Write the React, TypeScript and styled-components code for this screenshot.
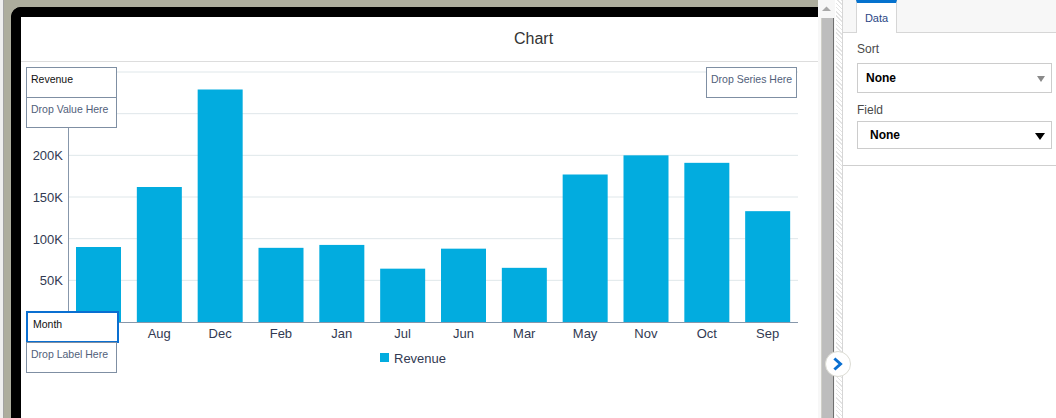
import * as React from 'react';
import styled, { createGlobalStyle } from 'styled-components';

const GlobalStyle = createGlobalStyle`
  html, body {
    margin: 0;
    padding: 0;
    background: #ffffff;
    font-family: "Liberation Sans", Arial, sans-serif;
  }
`;

const Page = styled.div`
  position: relative;
  display: flex;
  width: 1056px;
  height: 418px;
  overflow: hidden;
`;

const LeftRail = styled.div`
  width: 3px;
  background: #efefef;
  border-right: 1px solid #a3a3a3;
`;

const Backdrop = styled.div`
  flex: 1;
  display: flex;
  flex-direction: column;
  background: #adad9d;
  padding: 7px 0 0 7px;
`;

const Frame = styled.div`
  position: relative;
  flex: 1;
  background: #ffffff;
  border-top: 10px solid #000;
  border-left: 10px solid #000;
  border-top-left-radius: 10px;
  overflow: hidden;
`;

const Title = styled.div`
  height: 44px;
  line-height: 44px;
  border-bottom: 1px solid #dddddd;
  padding-left: 493px;
  font-size: 16px;
  color: #333333;
`;

const Scrollbar = styled.div`
  width: 17px;
  display: flex;
  flex-direction: column;
  background: #f7f7f7;
`;

const ArrowCell = styled.div`
  height: 18px;
  display: flex;
  align-items: center;
  justify-content: center;
`;

const Thumb = styled.div`
  flex: 1;
  margin: 0 1px 0 3px;
  background: #bdbdbd;
  border-left: 1px solid #d0d0c8;
  border-right: 1px solid #6f6f6f;
`;

const Divider = styled.div`
  width: 6px;
  background: repeating-linear-gradient(45deg, #ffffff 0 2px, #e4e4e4 2px 3px);
  border-left: 1px solid #ffffff;
`;

const Panel = styled.div`
  width: 213px;
  border-left: 1px solid #d6d6d6;
  display: flex;
  flex-direction: column;
  background: #fff;
`;

const TabStrip = styled.div`
  height: 32px;
  background: #f7f7f7;
  border-bottom: 1px solid #d6d6d6;
  padding-left: 13px;
  display: flex;
  align-items: flex-start;
`;

const Tab = styled.div`
  width: 39px;
  height: 30px;
  margin-bottom: -1px;
  background: #ffffff;
  border-top: 3px solid #0572ce;
  border-left: 1px solid #d6d6d6;
  border-right: 1px solid #d6d6d6;
  display: flex;
  align-items: center;
  justify-content: center;
  font-size: 11px;
  color: #2a4785;
`;

const Fields = styled.div`
  display: flex;
  flex-direction: column;
  padding: 0 4px 16px 14px;
  border-bottom: 1px solid #cfcfcf;
`;

const Label = styled.div<{ $top: number }>`
  margin-top: ${(p) => p.$top}px;
  height: 14px;
  line-height: 14px;
  font-size: 12px;
  color: #4a4a4a;
`;

const Select = styled.div<{ $h: number; $pad: number }>`
  margin-top: ${(p) => (p.$h === 30 ? 7 : 4)}px;
  height: ${(p) => p.$h - 2}px;
  border: 1px solid #cccccc;
  display: flex;
  align-items: center;
  justify-content: space-between;
  padding: 0 6px 0 ${(p) => p.$pad}px;
  font-size: 12px;
  font-weight: bold;
  color: #000;
`;

const Caret = styled.span<{ $color: string; $w: number }>`
  width: 0;
  height: 0;
  border-left: ${(p) => p.$w / 2}px solid transparent;
  border-right: ${(p) => p.$w / 2}px solid transparent;
  border-top: ${(p) => p.$w * 0.7}px solid ${(p) => p.$color};
  margin-top: 2px;
`;

const DropStack = styled.div<{ $x: number; $y: number }>`
  position: absolute;
  left: ${(p) => p.$x}px;
  top: ${(p) => p.$y}px;
  display: flex;
  flex-direction: column;
`;

const DropBox = styled.div<{ $filled?: boolean; $active?: boolean }>`
  box-sizing: border-box;
  width: ${(p) => (p.$active ? 93 : 91)}px;
  height: ${(p) => (p.$active ? 32 : 31)}px;
  margin-top: ${(p) => (p.$active ? 0 : -1)}px;
  background: #ffffff;
  border: ${(p) => (p.$active ? '2px solid #0a6fd1' : '1px solid #7f8fa3')};
  padding: ${(p) => (p.$active ? '5px 0 0 5px' : '5px 0 0 4px')};
  font-size: 10.5px;
  line-height: 12px;
  color: ${(p) => (p.$filled ? '#111' : '#51607a')};
  &:first-child {
    margin-top: 0;
  }
`;

const NavButton = styled.div`
  position: absolute;
  left: 825px;
  top: 351px;
  width: 26px;
  height: 26px;
  border-radius: 50%;
  background: #ffffff;
  border: 1px solid #dcdcd4;
  box-sizing: border-box;
  display: flex;
  align-items: center;
  justify-content: center;
`;

const months = ['Apr', 'Aug', 'Dec', 'Feb', 'Jan', 'Jul', 'Jun', 'Mar', 'May', 'Nov', 'Oct', 'Sep'];
const revenue = [90000, 162000, 279000, 89000, 92500, 64000, 88000, 65000, 177000, 200000, 191000, 133000];
// 250K / 300K labels sit under the drop boxes, so only the visible ones are drawn
const ticks = [50000, 100000, 150000, 200000, 250000, 300000];
const labelled = [50000, 100000, 150000, 200000];

const plotLeft = 47;
const plotRight = 777;
const baseY = 260;
const yOf = (v: number) => baseY - (v * 250) / 300000;

const Chart = () => {
  const band = (plotRight - plotLeft) / months.length;
  return (
    <svg width="797" height="356" style={{ display: 'block' }} fontFamily='"Liberation Sans", Arial, sans-serif'>
      {ticks.map((t) => (
        <line key={t} x1={plotLeft} x2={plotRight} y1={yOf(t)} y2={yOf(t)} stroke="#dfe7ea" strokeWidth="1" />
      ))}
      {labelled.map((t) => (
        <text key={'l' + t} x={42} y={yOf(t) + 5} textAnchor="end" fontSize="13" fill="#323a52">
          {t / 1000}K
        </text>
      ))}
      {revenue.map((v, i) => (
        <rect key={months[i]} x={plotLeft + i * band + 8} y={yOf(v)} width={45} height={baseY - yOf(v)} fill="#02acdf" />
      ))}
      <line x1={plotLeft + 0.5} x2={plotLeft + 0.5} y1={10} y2={baseY} stroke="#8797ab" />
      <line x1={plotLeft} x2={plotRight} y1={baseY + 0.5} y2={baseY + 0.5} stroke="#8797ab" />
      {months.slice(1).map((m, i) => (
        <text key={'m' + m} x={plotLeft + (i + 1) * band + band / 2} y={276} textAnchor="middle" fontSize="13" fill="#323a52">
          {m}
        </text>
      ))}
      <rect x={359} y={291} width={9} height={9} fill="#02acdf" />
      <text x={373} y={301} fontSize="13" fill="#323a52">Revenue</text>
    </svg>
  );
};

export default function App() {
  return (
    <>
      <GlobalStyle />
      <Page>
        <LeftRail />
        <Backdrop>
          <Frame>
            <Title>Chart</Title>
            <Chart />
            <DropStack $x={5} $y={50}>
              <DropBox $filled>Revenue</DropBox>
              <DropBox>Drop Value Here</DropBox>
            </DropStack>
            <DropStack $x={5} $y={294}>
              <DropBox $filled $active>Month</DropBox>
              <DropBox>Drop Label Here</DropBox>
            </DropStack>
            <DropStack $x={685} $y={50}>
              <DropBox>Drop Series Here</DropBox>
            </DropStack>
          </Frame>
        </Backdrop>
        <Scrollbar>
          <ArrowCell>
            <svg width="9" height="6" viewBox="0 0 9 6">
              <path d="M0 5 L4.5 0.5 L9 5 Z" fill="#a8a8a8" />
            </svg>
          </ArrowCell>
          <Thumb />
        </Scrollbar>
        <Divider />
        <Panel>
          <TabStrip>
            <Tab>Data</Tab>
          </TabStrip>
          <Fields>
            <Label $top={9}>Sort</Label>
            <Select $h={30} $pad={8}>
              None
              <Caret $color="#8a8a8a" $w={9} />
            </Select>
            <Label $top={10}>Field</Label>
            <Select $h={28} $pad={12}>
              None
              <Caret $color="#000" $w={10} />
            </Select>
          </Fields>
        </Panel>
        <NavButton>
          <svg width="12" height="14" viewBox="0 0 12 14">
            <path d="M3.5 2.5 L8.5 7 L3.5 11.5" fill="none" stroke="#0a6fd1" strokeWidth="3" strokeLinecap="square" />
          </svg>
        </NavButton>
      </Page>
    </>
  );
}
